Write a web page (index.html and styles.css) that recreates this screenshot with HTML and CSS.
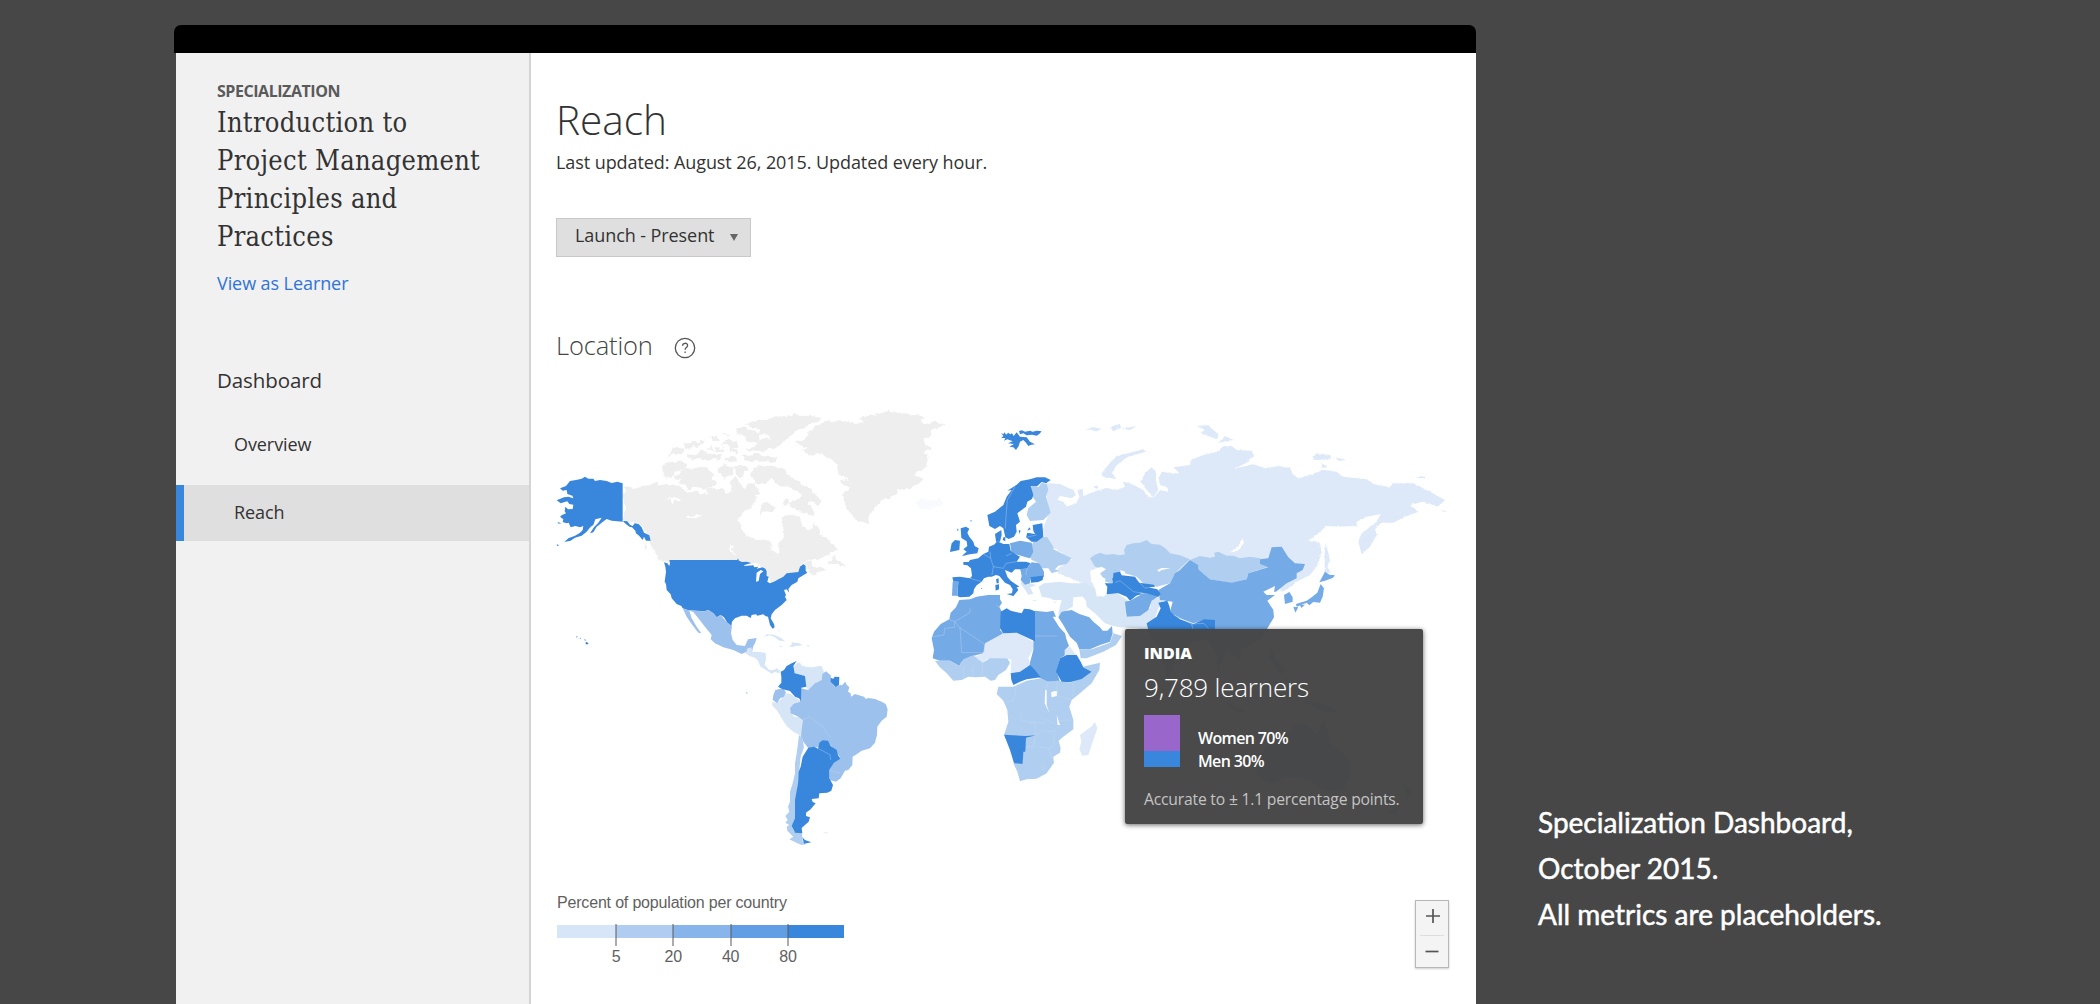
FILE: index.html
```html
<!DOCTYPE html>
<html lang="en">
<head>
<meta charset="utf-8">
<title>Specialization Dashboard</title>
<link rel="stylesheet" href="styles.css">
</head>
<body>
<div class="window">
  <div class="titlebar"></div>
  <div class="app">
    <aside class="sidebar">
      <div class="course">
        <div class="eyebrow">SPECIALIZATION</div>
        <h2 class="course-title">Introduction to<br>Project Management<br>Principles and<br>Practices</h2>
        <a class="learner-link">View as Learner</a>
        <div class="nav-heading">Dashboard</div>
      </div>
      <nav>
        <a class="nav-item">Overview</a>
        <a class="nav-item active">Reach</a>
      </nav>
    </aside>
    <main class="main">
      <h1>Reach</h1>
      <p class="updated">Last updated: August 26, 2015. Updated every hour.</p>
      <button class="range"><span>Launch - Present</span><i class="caret"></i></button>
      <div class="section-head">
        <h3>Location</h3>
        <svg class="help" viewBox="0 0 22 22"><circle cx="11" cy="11" r="9.7"/><path d="M8.6 8.7c0-3.2 5-3.2 5-.2 0 2-2.5 2-2.5 4.2M11.1 14.4v1.6"/></svg>
      </div>
      <div class="map">
        <svg class="world" viewBox="556 400 904 460">
          <defs>
            <filter id="coast" x="-5%" y="-5%" width="110%" height="110%">
              <feTurbulence type="fractalNoise" baseFrequency="0.13" numOctaves="3" seed="4" result="n"/>
              <feDisplacementMap in="SourceGraphic" in2="n" scale="7" xChannelSelector="R" yChannelSelector="G"/>
            </filter>
          </defs>

          <!-- Canada -->
          <g class="none" filter="url(#coast)">
            <g transform="translate(541 401) scale(.33333)">
              <path d="M249 252 262 255 275 264 300 258 325 256 345 243 352 255 378 248 385 258 395 245 410 258 425 262 440 272 465 272 480 278 490 270 500 285 498 265 515 258 530 268 545 265 555 275 575 270 570 245 575 228 592 235 600 262 612 268 620 252 640 246 655 262 650 280 635 285 645 300 630 312 625 325 605 335 592 360 598 385 620 395 625 410 650 418 680 415 690 425 688 440 700 455 712 455 712 430 728 410 728 385 718 370 722 345 750 342 780 352 785 372 800 385 812 380 818 360 828 378 840 400 858 418 880 432 885 445 870 455 845 468 815 472 790 482 778 497 800 480 815 480 808 492 830 500 845 498 855 510 835 515 815 528 806 522 800 505 795 495 775 515 740 520 715 537 690 548 682 530 670 500 645 490 595 484 388 484 375 488 350 470 345 460 335 445 325 420 310 385 295 370 280 366 262 364 249 364Z"/>
              <path d="M370 185 400 182 440 188 430 200 405 215 395 230 380 228 362 218ZM430 200 460 205 480 195 500 200 520 215 515 235 530 250 500 262 470 255 440 262 430 250 410 250 420 235 400 230 418 215ZM385 160 400 145 430 138 428 150 410 160 388 164ZM430 130 455 124 485 122 482 132 455 138 432 140ZM440 160 465 163 480 148 500 158 545 160 545 172 510 180 470 172 450 176ZM510 110 530 108 532 120 515 120ZM540 125 560 112 590 125 592 140 570 142 565 132 545 132ZM520 135 550 142 548 150 525 148ZM500 145 512 132 520 150ZM565 142 592 146 590 160 568 156ZM535 200 555 190 575 198 572 222 550 230 530 215ZM580 196 615 192 620 205 600 230 582 222ZM550 178 575 165 590 180 570 184Z"/>
              <path d="M615 70 680 50 750 43 810 45 845 52 820 65 800 75 770 85 750 100 742 115 720 130 700 145 660 150 625 148 612 140 640 134 655 118 690 112 665 100 640 98 660 86 640 80ZM585 80 605 74 640 90 655 102 650 122 625 125 615 112 590 98ZM600 165 640 158 705 168 705 180 650 182 610 178ZM545 98 565 100 560 104Z"/>
              <path d="M630 215 638 198 660 195 690 195 725 200 745 225 780 245 810 265 843 297 830 312 808 300 800 310 820 330 815 345 790 335 760 325 745 315 755 300 775 295 780 280 750 260 725 255 700 245 690 230 672 245 650 248 632 230ZM660 320 668 302 690 308 705 322 695 335 670 330 655 345ZM722 302 735 295 742 305 728 312ZM862 490 875 470 885 460 888 475 900 482 908 498 890 495ZM310 430 322 442 316 446ZM348 462 372 480 366 486Z"/>
              <path class="water" d="M375 290 392 294 400 285 422 296 400 298 396 310 386 306 388 298ZM432 350 455 348 462 338 482 344 462 350 440 358ZM565 432 574 436 582 462 572 452Z"/>
            </g>
            <!-- Greenland -->
            <g transform="translate(742 391) scale(.33333)">
              <path d="M160 155 200 135 195 122 230 100 260 90 300 88 340 98 370 92 350 82 390 72 440 63 500 66 545 80 530 92 560 100 580 93 612 100 590 112 570 120 560 140 545 150 550 165 570 175 550 185 560 200 550 215 555 230 530 240 520 255 543 270 520 285 490 295 470 300 450 320 420 325 400 345 385 370 380 398 360 392 340 385 320 360 305 330 300 312 318 290 300 280 298 270 318 265 290 250 285 225 270 205 240 190 200 190 175 180 200 170Z"/>
              <path class="iceland" d="M525 330 545 322 560 330 595 322 603 338 570 356 535 352Z"/>
            </g>
          </g>

          <!-- Russia -->
          <g class="l0" filter="url(#coast)" transform="translate(1080 410) scale(.33333)">
            <path d="M-102 220-60 222-20 240-12 255-25 265-60 258-68 270-50 275-40 290-12 280-2 262-8 240 8 236 10 258 50 242 80 234 110 240 135 230 128 215 150 220 190 240 205 262 220 262 235 240 228 215 228 185 215 172 195 190 182 215 200 240 222 262 240 240 265 245 262 232 240 225 236 205 245 185 272 190 298 190 280 172 330 165 332 150 370 135 412 125 430 108 455 108 470 120 515 122 522 138 500 158 460 178 520 162 555 175 600 168 630 174 640 195 655 205 690 195 730 180 770 185 790 200 860 208 880 222 930 232 938 220 1000 220 1050 245 1095 270 1075 290 1030 275 990 285 1015 305 975 320 940 338 905 338 885 355 890 375 870 410 845 433 835 395 845 370 890 335 902 312 860 320 830 335 830 348 770 350 740 348 715 370 685 392 720 400 725 430 710 470 690 495 650 515 620 540 605 545 560 480 300 480 30 480 38 492 32 512 45 530 20 525-10 512-40 500-70 488-65 475-25 448-80 415-105 385-112 360-92 305-100 260Z"/>
            <path d="M65 190 90 158 110 138 150 128 190 118 198 125 140 142 108 168 96 190 110 208 70 200ZM18 58 40 52 65 56 50 64ZM90 52 115 42 125 52 100 64ZM125 56 170 48 150 60ZM350 48 385 46 400 60 415 72 412 88 390 80 362 68 375 60ZM415 98 435 78 460 90ZM697 140 710 130 752 136 752 148 705 150ZM765 142 800 150 775 152ZM722 160 745 170 728 174ZM1010 204 1025 198 1038 204ZM1083 300 1103 304 1090 306ZM38 230 56 226 50 236ZM737 400 744 425 750 450 742 470 752 490 734 490 734 430Z"/>
            <path class="water" d="M452 426 475 408 488 385 490 400 478 418 462 426Z"/>
          </g>

          <!-- United States, Mexico -->
          <g transform="translate(540 400) scale(.33333)">
            <g class="l5">
              <path d="M135 230 125 236 108 240 90 243 78 258 60 265 68 272 80 270 82 282 97 287 100 295 85 290 72 292 50 301 62 310 82 304 88 312 100 314 98 327 84 328 76 320 74 334 78 340 66 345 60 350 70 358 68 366 80 370 86 368 92 382 106 378 120 382 130 378 128 390 120 398 105 407 85 415 73 426 92 422 105 413 125 407 140 395 152 380 160 375 166 358 185 353 175 368 162 382 150 400 160 397 170 380 185 368 200 357 215 362 248 365 248 250 232 245 215 249 200 243 180 240 165 243 160 236 145 236ZM248 362 262 364 270 374 278 378 284 370 296 372 305 382 312 398 328 406 332 422 318 422 312 410 308 420 298 408 288 400 286 392 276 382 268 380 255 370ZM50 433 58 436 52 438ZM52 366 64 370 56 371ZM109 707 113 710 110 713ZM120 713 124 717 119 716ZM132 718 139 720 135 722ZM138 725 146 730 141 734 136 730Z"/>
              <path d="M388 480H592L594 475 597 482 606 486 620 485 634 489 614 495 612 498 640 496 643 502 655 500 650 506 668 502 676 506 680 514 680 528 686 530 682 545 690 550 705 544 715 538 730 530 740 520 775 516 780 500 790 493 797 497 797 512 802 518 775 535 772 545 755 555 745 567 748 578 740 568 732 570 738 585 735 590 740 600 725 615 705 630 695 643 692 655 702 672 704 682 698 686 690 675 684 650 676 648 670 643 652 647 648 643 635 645 632 654 620 647 605 647 585 655 576 665 574 678 562 668 552 652 542 645 530 652 520 640 505 630 494 634 445 631 428 625 424 618 410 612 395 595 392 583 380 570 378 552 374 545 378 515 376 500 372 487 382 490 388 498 390 490Z"/>
            </g>
            <path class="water" d="M650 518 662 510 670 514 660 522 656 543 648 545Z"/>
            <path class="l2" d="M428 625 445 631 470 633 494 634 505 630 520 640 530 652 542 645 562 668 576 678 573 700 578 720 590 735 615 738 624 718 650 714 645 730 640 738 636 755 625 745 620 755 605 762 580 750 550 742 525 730 512 718 515 705 495 680 475 655 460 636 448 632 455 655 470 680 484 700 475 698 455 672 440 650Z"/>
          </g>

          <!-- Central and South America -->
          <g transform="translate(740 620) scale(.33333)">
            <path class="l1" d="M72 50 80 43 100 44 120 52 136 64 118 62 105 52 90 46ZM116 77 130 79 120 81ZM146 78 155 75 155 67 178 70 188 76 165 79 158 81ZM200 76 212 77 204 80ZM14 98 22 95 20 87 34 82 37 95 60 96 77 99 78 118 74 134 88 150 100 150 110 145 120 152 118 160 104 156 95 161 78 150 62 140 52 120 42 112 30 109ZM116 28 120 34 116 33Z"/>
            <path class="l1" d="M160 140 172 128 180 128 184 136 200 141 220 142 232 139 245 138 252 156 245 180 225 190 224 205 205 210 198 200 194 168 165 162ZM97 245 112 250 138 220 152 222 165 232 182 243 155 258 150 272 162 290 186 292 188 350 160 335 140 318 128 300 112 272 96 256Z"/>
            <path class="l2" d="M225 190 245 180 247 162 258 154 272 166 275 190 285 200 300 195 306 196 316 185 320 194 328 202 324 215 332 220 333 230 345 222 372 230 378 237 385 234 405 237 425 245 437 252 443 268 440 290 425 302 412 320 411 345 405 368 390 385 365 392 350 403 338 410 337 435 325 450 315 452 302 475 288 485 268 480 268 450 280 430 300 412 285 390 265 368 240 370 235 382 205 385 190 365 183 350 188 300 175 290 152 280 150 265 160 252 180 245 182 205 205 210ZM106 210 128 205 138 216 132 230 120 235 112 250 98 240 100 225ZM18 215 24 219 20 222Z"/>
            <path class="l2b" d="M177 345 187 355 192 382 182 410 178 450 173 500 167 550 166 590 156 620 162 635 186 640 188 665 200 672 185 675 172 670 148 658 160 650 142 632 140 620 148 615 136 608 143 600 136 588 148 575 144 560 150 545 150 515 158 490 165 460 165 430 170 400 174 370Z"/>
            <path class="l5" d="M122 155 132 150 140 138 155 130 170 123 160 138 164 160 195 168 199 200 184 203 183 243 177 235 165 230 150 213 128 208 114 200 124 188 124 170ZM272 174 280 176 284 170 298 171 297 195 287 201 272 186ZM205 383 222 380 234 386 238 368 248 361 264 362 272 378 290 390 294 405 301 416 282 428 268 450 268 475 279 495 274 512 262 518 238 520 236 535 215 537 218 546 227 550 212 568 198 578 198 588 210 592 206 605 195 615 185 624 187 640 165 638 155 618 165 594 165 540 174 490 176 455 182 440 188 410ZM187 652 195 660 214 667 192 671Z"/>
            <path class="border" d="M188 300 210 290 225 305 250 320 258 338 272 350M270 452 300 460M235 386 270 404 272 420"/>
            <path class="none" d="M248 636 266 637 258 641Z"/>
          </g>

          <!-- Europe -->
          <g transform="translate(920 400) scale(.33333)">
            <path class="l1" d="M303 545 330 550 350 556 330 562 340 582 325 584 312 565 302 552ZM356 560 372 550 420 545 450 550 500 550 508 588 480 590 460 592 458 620 440 630 432 655 418 655 415 640 425 600 400 600 390 595 365 590ZM335 601 352 601 345 604ZM400 606 412 604 405 608Z"/>
            <path class="l2b" d="M332 260 345 255 355 262 365 248 380 252 385 268 378 290 392 338 370 360 330 363 320 345 325 325 348 305 338 290ZM345 418 365 410 382 412 400 440 400 448 455 475 440 492 415 497 405 508 418 512 395 520 385 505 365 505 358 490 335 480 330 470 338 450 335 435Z"/>
            <path class="l3" d="M270 430 300 422 335 428 340 455 330 475 318 472 295 465 275 460ZM300 505 325 500 335 487 358 490 372 515 372 530 330 530 330 550 315 554 302 540 305 528Z"/>
            <path class="l5" d="M202 345 225 335 250 315 260 290 275 270 262 272 290 254 302 243 330 238 350 232 375 232 392 240 378 250 365 246 352 258 332 258 340 285 336 297 322 305 318 320 292 340 300 365 288 375 290 395 282 410 266 417 256 412 250 385 240 378 225 387 208 378ZM243 98 250 103 254 97 258 104 265 98 270 103 276 100 281 108 290 97 300 110 320 112 330 125 345 133 334 134 325 138 318 128 310 120 300 125 296 138 288 150 280 142 268 140 282 132 264 130 278 124 262 118 252 122 256 114 244 114 250 108ZM297 93 306 91 315 95 330 92 338 95 350 92 365 94 358 102 350 107 336 104 320 106 310 100 300 103ZM338 375 367 370 370 410 350 425 335 425 318 412 322 398 345 402 340 392ZM322 392 328 382 332 388ZM122 385 138 380 148 386 142 398 148 410 160 425 164 438 176 445 172 460 150 463 125 468 140 455 130 448 142 438 140 424 124 414ZM95 430 105 420 120 422 118 450 90 456 92 445ZM112 385 116 390 112 394ZM152 360 156 362 152 366ZM225 402 244 390 245 405 240 425 228 425ZM250 412 256 412 256 424 248 420ZM296 390 302 392 298 402Z"/>
            <path class="l5" d="M97 532 120 530 150 535 156 528 153 505 142 496 130 494 130 486 146 486 150 480 175 475 190 462 205 455 207 440 222 434 232 424 250 432 268 432 272 452 282 460 300 470 290 485 318 485 332 490 322 503 300 508 285 508 275 518 255 510 262 530 272 542 298 560 290 562 295 570 280 588 260 582 276 580 278 568 270 555 255 548 238 528 228 525 215 530 205 530 192 535 185 545 170 556 162 568 160 580 148 590 120 592 112 588 115 545 100 545ZM228 538 236 535 236 550 230 550ZM226 555 237 553 237 568 227 572ZM183 563 187 565 183 567ZM330 530 370 527 368 540 355 546 333 548Z"/>
            <path class="l3" d="M98 545 115 545 112 587 96 587Z"/>
            <path class="border" d="M285 260 262 300 258 350 256 385M318 412 350 405M190 462 212 475 210 455M212 475 220 500 250 505 258 490 290 485M258 468 275 460M150 535 185 545M220 500 216 525M322 503 318 525"/>
          </g>

          <!-- Africa and Arabia -->
          <g transform="translate(920 590) scale(.33333)">
            <path class="l3" d="M118 30 150 28 170 20 205 15 240 15 240 28 246 38 238 50 246 66 240 120 250 130 200 165 190 190 150 200 125 215 118 228 90 212 60 212 38 205 42 180 35 145 42 125 62 102 88 88 92 68 108 52ZM345 62 380 66 400 62 408 80 398 80 418 112 435 130 440 150 447 168 435 180 436 195 420 205 410 245 420 275 380 275 345 255 328 225 340 180 340 150ZM425 65 455 60 478 72 508 82 520 95 540 112 548 122 562 122 576 108 578 130 570 155 540 165 510 178 478 178 470 158 450 140 430 105 415 82Z"/>
            <path class="l0" d="M195 160 250 130 290 128 340 155 338 180 325 205 330 225 300 245 272 250 274 210 262 205 200 208 188 218 165 200 190 190ZM434 180 450 170 478 208 460 195 434 195ZM480 435 500 420 516 408 525 395 532 415 520 450 505 495 487 497 478 478 484 455Z"/>
            <path class="l2b" d="M45 212 90 212 118 228 130 208 160 196 188 218 210 205 262 205 270 218 258 240 235 255 225 270 212 272 195 260 165 262 145 260 125 270 100 272 80 250 58 230ZM478 178 515 178 570 158 580 130 606 138 588 165 550 185 500 205 482 205Z"/>
            <path class="l2b" d="M235 290 280 290 320 272 362 265 385 275 415 272 450 278 485 265 515 245 488 230 540 218 538 240 515 280 480 310 455 330 448 350 460 390 460 418 430 440 416 452 422 475 420 488 400 500 402 518 380 550 350 566 320 568 300 574 292 545 280 520 308 522 310 440 252 435 265 395 262 360 250 332 230 312Z"/>
            <path class="l5" d="M242 65 260 55 272 62 305 70 312 56 330 58 345 64 345 154 290 128 250 130 240 115ZM272 250 300 245 330 225 345 240 362 262 320 268 300 275 280 285 274 270ZM420 205 440 195 470 195 482 215 490 232 515 245 485 267 450 277 425 275 408 245ZM252 434 318 438 348 436 318 443 316 485 310 485 308 522 282 520 270 480Z"/>
            <path class="water" d="M393 308 400 304 412 303 410 318 395 322ZM376 300 374 340 388 368 380 345 380 300ZM410 375 420 405 413 405Z"/>
            <path class="border" d="M88 88 104 95 118 112 193 162 193 188 125 188 120 112M104 95 104 112 74 115 72 135 40 140M104 95 150 68 150 55M345 138 412 138M240 55 230 45M130 228 132 262M158 228 160 260M188 218 186 258M290 285 280 330 258 338M302 362 305 390 345 402 345 436M330 395 375 400 378 388 402 400M385 275 378 300M410 310 412 270M455 330 412 318M418 392 455 390M415 408 402 425 370 422 345 436 342 470 318 470M402 425 402 470 385 475 355 470M460 278 460 320M385 475 402 518M362 532 370 524 376 532 368 540Z"/>
          </g>

          <!-- Asia -->
          <g transform="translate(1080 410) scale(.33333)">
            <path class="l1" d="M0 518 20 522 50 535 50 560 85 552 115 552 145 572 138 620 180 618 210 595 215 570 240 560 248 575 235 595 225 625 205 640 215 650 210 665 170 655 120 652 100 648 75 640 45 610 20 590 18 572 0 550Z"/>
            <path class="l2b" d="M30 445 45 434 60 428 78 434 100 432 118 436 135 433 132 420 140 405 160 400 180 398 200 390 215 402 240 404 258 416 270 430 300 436 330 448 300 475 280 500 270 520 230 530 190 520 170 500 120 485 100 488 98 520 75 515 60 490 75 478 45 470ZM330 450 360 438 390 443 405 440 403 428 415 425 440 437 460 437 480 445 510 440 540 445 540 462 565 470 505 490 500 508 455 520 390 508 355 478 355 465Z"/>
            <path class="water" d="M30 486 45 476 65 470 78 478 60 490 66 500 76 506 76 518 72 524 82 534 80 552 70 560 50 555 44 530 34 510ZM232 480 245 474 272 475 245 480 236 486ZM120 480 136 485 128 498Z"/>
            <path class="l3" d="M330 450 355 465 355 478 390 508 455 518 500 508 505 490 565 472 540 462 540 448 565 445 575 412 605 410 625 442 645 460 675 462 668 480 650 490 650 505 620 520 588 545 582 545 585 528 550 545 560 555 585 555 562 572 580 600 582 622 565 650 540 690 480 720 410 700 400 660 400 635 370 630 340 640 300 625 270 605 278 575 240 570 235 540 270 520 285 490 300 480ZM135 575 150 572 190 550 215 548 237 558 215 572 205 600 180 618 140 620ZM612 555 628 546 638 562 638 575 615 582ZM735 485 748 494 765 496 758 504 735 512 718 517ZM722 522 732 535 728 560 720 578 700 576 688 586 680 578 650 590 648 582 680 572 695 562 712 548ZM640 590 655 592 646 608ZM660 585 675 584 664 594Z"/>
            <path class="l5" d="M100 488 120 485 125 496 165 500 178 518 222 524 225 530 205 532 232 538 242 552 235 560 200 550 180 548 150 572 140 560 115 550 80 553 82 530 74 520 98 520ZM235 578 262 572 268 588 272 605 300 628 340 642 372 628 405 630 405 670 370 690 330 700 290 740 265 810 240 720 210 680 200 640 230 620 242 595Z"/>
            <path class="l5" d="M96 505 125 510 165 545 190 552 150 560 110 545Z"/>
            <path class="border" d="M105 518 120 512 160 545 190 550M170 508 195 535 205 532M280 615 335 642 372 640 385 655M335 642 340 660"/>
          </g>

          <!-- South-east Asia and Oceania -->
          <g class="l5" transform="translate(1110 610) scale(.33333)">
            <path d="M270 60 300 100 320 140 320 190 350 120 390 150 400 90 440 60ZM480 110 500 150 525 180 510 195 480 150ZM300 240 370 290 420 305 380 305ZM570 270 640 280 700 310 640 305ZM440 500 440 450 480 400 530 370 560 340 600 350 620 375 640 330 665 400 720 450 720 500 700 540 640 545 600 510 540 500 480 520ZM880 520 910 545 890 570ZM830 610 875 580 860 610Z"/>
          </g>
        </svg>

        <div class="tooltip">
          <div class="tip-country">INDIA</div>
          <div class="tip-count">9,789 learners</div>
          <div class="tip-split">
            <div class="tip-bar"><i class="women"></i><i class="men"></i></div>
            <div class="tip-labels">Women 70%<br>Men 30%</div>
          </div>
          <div class="tip-note">Accurate to ± 1.1 percentage points.</div>
        </div>
      </div>

      <div class="map-footer">
        <div class="legend">
          <div class="legend-title">Percent of population per country</div>
          <div class="scale">
            <span class="seg s1"></span>
            <span class="seg s2"><b>5</b></span>
            <span class="seg s3"><b>20</b></span>
            <span class="seg s4"><b>40</b></span>
            <span class="seg s5"><b>80</b></span>
          </div>
        </div>
        <div class="zoom">
          <svg viewBox="0 0 30 34"><path d="M9 15h14M16 8v14"/></svg>
          <svg viewBox="0 0 24 31"><path d="M5.500 15.500h13"/></svg>
        </div>
      </div>
    </main>
  </div>
</div>
<p class="caption">Specialization Dashboard,<br>October 2015.<br>All metrics are placeholders.</p>
</body>
</html>
```
FILE: styles.css
```css
* { box-sizing: border-box; margin: 0; padding: 0; }

body {
  display: flex;
  height: 1004px;
  overflow: hidden;
  background: #474747;
  font-family: "Open Sans", sans-serif;
  font-size: 18px;
  line-height: 24px;
  letter-spacing: -0.08px;
  color: #333;
}

.window { width: 1302px; margin: 25px 0 0 174px; flex: none; }
.titlebar { height: 28px; background: #000; border-radius: 7px 7px 0 0; }
.app { display: flex; height: 951px; margin-left: 2px; background: #fff; }

.sidebar {
  width: 355px;
  flex: none;
  padding-top: 28px;
  background: #f1f1f1;
  border-right: 2px solid #d4d4d4;
}
.course { padding-left: 41px; }
.eyebrow { font-size: 16px; line-height: 20px; font-weight: 700; color: #5a5a5a; letter-spacing: -0.45px; }
.course-title {
  margin-top: 3px;
  font-family: "DejaVu Serif Condensed", "DejaVu Serif", serif;
  font-stretch: condensed;
  font-weight: 400;
  font-size: 27px;
  line-height: 38px;
  letter-spacing: .3px;
  white-space: nowrap;
  color: #333;
}
.learner-link { display: block; margin-top: 15px; color: #2f74d8; }
.nav-heading { margin-top: 71px; font-size: 20.5px; line-height: 28px; }
nav { display: flex; flex-direction: column; gap: 13px; margin-top: 22px; }
.nav-item { height: 56px; padding-left: 58px; line-height: 56px; }
.nav-item.active { padding-left: 50px; background: #dfdfdf; border-left: 8px solid #3987dd; line-height: 55px; }

.main { flex: 1; min-width: 0; padding: 42px 27px 0 25px; }
h1 { font-size: 40.5px; line-height: 50px; font-weight: 300; letter-spacing: 0; }
.updated { margin-top: 5px; }
.range {
  display: flex;
  justify-content: space-between;
  width: 195px;
  height: 39px;
  margin-top: 44px;
  padding: 4px 12px 0 18px;
  border: 1px solid #c9c9c9;
  background: #dfdfdf;
  font: inherit;
  letter-spacing: inherit;
  color: inherit;
}
.caret { margin-top: 11px; border: 4.5px solid transparent; border-top: 7px solid #666; border-bottom: 0; }
.section-head { display: flex; gap: 21px; margin-top: 71px; height: 36px; }
h3 { font-size: 25.5px; line-height: 35px; font-weight: 300; letter-spacing: -0.15px; color: #444; }
.help { width: 22px; height: 22px; margin-top: 9px; fill: none; stroke: #555; stroke-width: 1.3; }

.map { position: relative; margin-top: 36px; height: 460px; }
.world { display: block; width: 904px; height: 460px; }
.none { fill: #eee; }
.iceland { fill: #f8fafd; }
.water { fill: #fff; }
.l0 { fill: #dde9f9; }
.l1 { fill: #d7e6f7; }
.l2 { fill: #9cc1ed; }
.l2b { fill: #b0cff0; }
.l3 { fill: #74aae5; }
.l5 { fill: #3987dd; }
.border { fill: none; stroke: #c6dcf5; stroke-opacity: .55; stroke-width: 2; }

.tooltip {
  position: absolute;
  left: 569px;
  top: 229px;
  width: 298px;
  height: 195px;
  padding: 15px 19px;
  border-radius: 2px;
  background: rgba(70, 70, 70, .98);
  box-shadow: 0 1px 5px rgba(0, 0, 0, .6);
  color: #fff;
  white-space: nowrap;
}
.tip-country { font-size: 16px; line-height: 18px; font-weight: 800; letter-spacing: 0; }
.tip-count { margin-top: 8px; font-size: 26px; line-height: 34px; font-weight: 300; letter-spacing: -0.2px; }
.tip-split { display: flex; gap: 18px; margin-top: 11px; height: 52px; }
.tip-bar { display: flex; flex-direction: column; width: 36px; }
.women { flex: 7; background: #9966cb; }
.men { flex: 3; background: #3987dd; }
.tip-labels { padding-top: 12px; font-size: 16px; line-height: 23px; font-weight: 600; letter-spacing: -0.65px; }
.tip-note { margin-top: 22px; font-size: 15.7px; line-height: 20px; letter-spacing: -0.2px; color: #c4c4c4; }

.map-footer { display: flex; justify-content: space-between; margin-top: 33px; }
.legend { padding-left: 1px; font-family: "Liberation Sans", Arial, sans-serif; font-size: 16px; line-height: 20px; letter-spacing: -0.18px; color: #5f5f5f; }
.scale { display: grid; grid-template-columns: 59px repeat(3, 57.3px) 56px; height: 13px; margin-top: 12px; }
.seg { position: relative; }
.seg b { position: absolute; left: -20px; top: 22px; width: 40px; text-align: center; font-weight: 400; }
.seg b::before { content: ""; position: absolute; left: 19px; top: -23px; width: 2px; height: 22px; background: rgba(90, 90, 90, .5); }
.s1 { background: #d6e5f8; }
.s2 { background: #b0cdf1; }
.s3 { background: #87b4ea; }
.s4 { background: #619ee4; }
.s5 { background: #3987dd; }

.zoom { width: 34px; height: 68px; margin-top: 7px; padding: 0 1px; border: 1px solid #b8b8b8; background: #f4f4f4; box-shadow: 0 1px 2px rgba(0, 0, 0, .2); }
.zoom svg { display: block; width: 30px; height: 34px; fill: none; stroke: #555; stroke-width: 1.7; }
.zoom svg + svg { margin: 0 3px; width: 24px; height: 32px; border-top: 1px solid #ddd; }

.caption {
  margin: 799px 0 0 62px;
  font-family: Lato, sans-serif;
  font-size: 28px;
  line-height: 46px;
  letter-spacing: 0;
  white-space: nowrap;
  color: #fff;
  -webkit-text-stroke: .5px #fff;
}
```
